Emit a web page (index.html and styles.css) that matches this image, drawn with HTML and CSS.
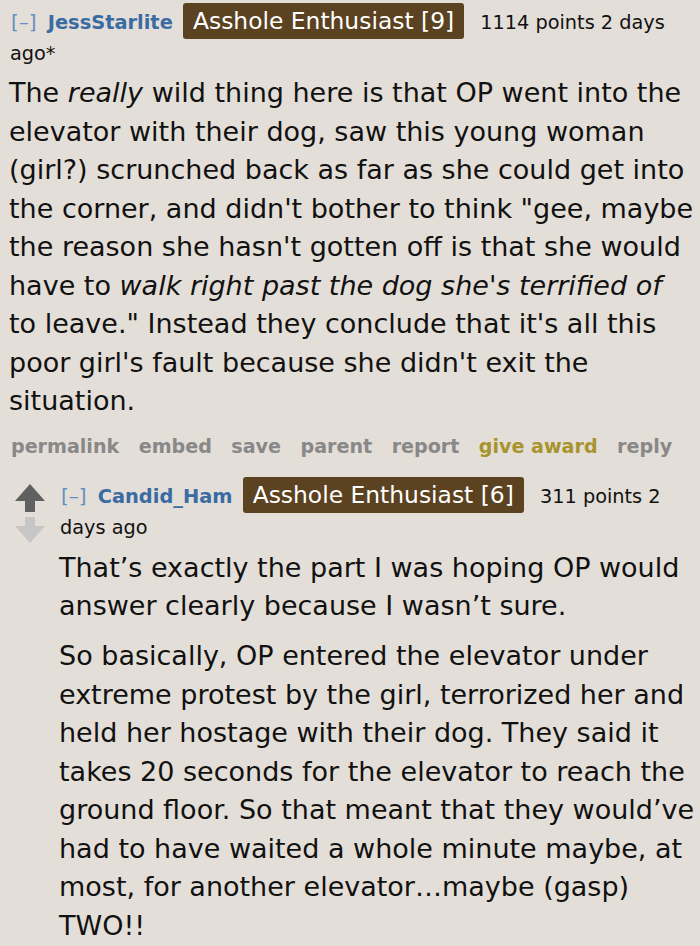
FILE: index.html
```html
<!DOCTYPE html>
<html>
<head>
<meta charset="utf-8">
<link rel="stylesheet" href="styles.css">
</head>
<body>
<div class="comment">
  <p class="tagline"><span class="expand">[–]</span> <span class="author">JessStarlite</span> <span class="flair">Asshole Enthusiast [9]</span> <span class="score">1114 points 2 days ago*</span></p>
  <div class="md">
    <p>The <em>really</em> wild thing here is that OP went into the elevator with their dog, saw this young woman (girl?) scrunched back as far as she could get into the corner, and didn't bother to think "gee, maybe the reason she hasn't gotten off is that she would have to <em>walk right past the dog she's terrified of</em> to leave." Instead they conclude that it's all this poor girl's fault because she didn't exit the situation.</p>
  </div>
  <ul class="buttons">
    <li>permalink</li>
    <li>embed</li>
    <li>save</li>
    <li>parent</li>
    <li>report</li>
    <li class="award">give award</li>
    <li>reply</li>
  </ul>
  <div class="child">
    <div class="votes">
      <svg class="arrow up" viewBox="0 0 30 28" width="30" height="28"><path d="M15 0 L30 17 L20 17 L20 28 L10 28 L10 17 L0 17 Z"/></svg>
      <svg class="arrow down" viewBox="0 0 30 26" width="30" height="26"><path d="M10 0 H20 V9 H30 L15 26 L0 9 H10 Z"/></svg>
    </div>
    <div class="entry">
      <p class="tagline"><span class="expand">[–]</span> <span class="author">Candid_Ham</span> <span class="flair">Asshole Enthusiast [6]</span> <span class="score">311 points 2 days ago</span></p>
      <div class="md">
        <p>That’s exactly the part I was hoping OP would answer clearly because I wasn’t sure.</p>
        <p>So basically, OP entered the elevator under extreme protest by the girl, terrorized her and held her hostage with their dog. They said it takes 20 seconds for the elevator to reach the ground floor. So that meant that they would’ve had to have waited a whole minute maybe, at most, for another elevator…maybe (gasp) TWO!!</p>
      </div>
    </div>
  </div>
</div>
</body>
</html>
```

FILE: styles.css
```css
html, body {
  margin: 0;
  padding: 0;
  background: #e3ded7;
}
body {
  font-family: "DejaVu Sans", "Verdana", sans-serif;
  color: #111;
}
.comment {
  padding: 6px 3px 0 10px;
}
.tagline {
  margin: 0;
  font-size: 19.3px;
  line-height: 31px;
}
.expand {
  color: #6690c4;
  font-size: 20px;
  margin: 0 5px 0 1px;
}
.author {
  font-weight: bold;
  color: #3a6ba3;
  font-size: 19.4px;
  margin-right: 4px;
}
.flair {
  background: #5b4220;
  color: #fff;
  font-size: 23.4px;
  padding: 4px 10px;
  border-radius: 3px;
  margin-right: 10px;
}
.score {
  color: #111;
}
.md {
  margin-top: 5px;
  margin-left: -1px;
}
.md p {
  margin: 0;
  font-size: 27px;
  line-height: 38.5px;
}
.buttons {
  list-style: none;
  display: flex;
  gap: 19.5px;
  margin: 10px 0 0 1px;
  padding: 0;
  font-weight: bold;
  font-size: 19.1px;
  line-height: 32px;
  color: #888;
}
.buttons .award {
  color: #a8942e;
}
.child {
  display: flex;
  margin-top: 17px;
}
.votes {
  display: flex;
  flex-direction: column;
  gap: 5px;
  width: 50px;
  flex: none;
  padding: 4px 0 0 5px;
  box-sizing: border-box;
}
.arrow {
  display: block;
}
.arrow.up { fill: #606060; }
.arrow.down { fill: #c6c6c6; }
.entry {
  flex: 1;
}
.child .md {
  margin-top: 6px;
}
.child .md p + p {
  margin-top: 11.5px;
}
```
